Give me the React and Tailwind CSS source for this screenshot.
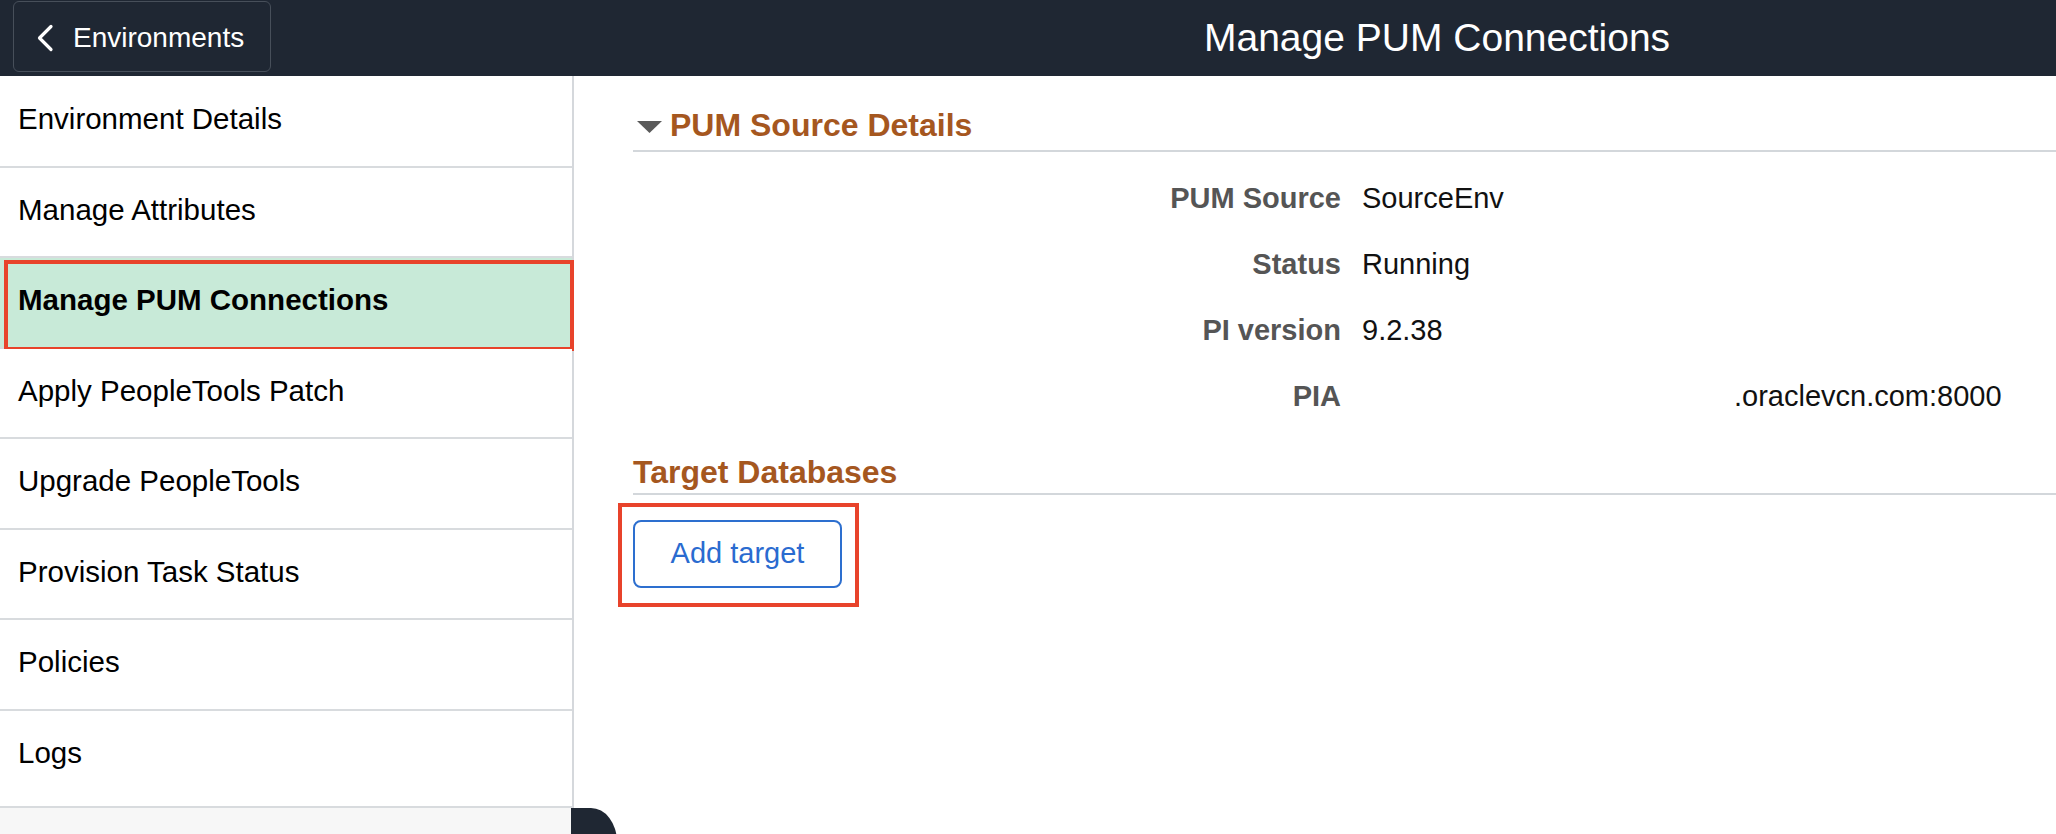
import React from "react";

const navItems = [
  "Environment Details",
  "Manage Attributes",
  "Manage PUM Connections",
  "Apply PeopleTools Patch",
  "Upgrade PeopleTools",
  "Provision Task Status",
  "Policies",
  "Logs",
];

const fields = [
  { label: "PUM Source", value: "SourceEnv", pad: false },
  { label: "Status", value: "Running", pad: false },
  { label: "PI version", value: "9.2.38", pad: false },
  { label: "PIA", value: ".oraclevcn.com:8000", pad: true },
];

export default function App() {
  return (
    <div className="relative w-[2056px] h-[834px] overflow-hidden bg-white flex flex-col font-['Liberation_Sans',Arial,Helvetica,sans-serif]">
      {/* Header */}
      <header className="h-[76px] shrink-0 bg-[#1f2733] flex items-start">
        <button className="mt-[1px] ml-[13px] h-[71px] w-[258px] rounded-[6px] border-[1.5px] border-[#474f5a] flex items-center pl-[22px] pt-[3px] text-white">
          <svg width="18" height="28" viewBox="0 0 18 28" fill="none" className="shrink-0">
            <polyline points="15,2.5 3.5,14 15,25.5" stroke="white" strokeWidth="3.2" strokeLinecap="round" strokeLinejoin="round" />
          </svg>
          <span className="ml-[19px] text-[28px] leading-none">Environments</span>
        </button>
        <h1 className="ml-[933px] self-center pb-[2px] text-[39px] font-normal text-white leading-none whitespace-nowrap">
          Manage PUM Connections
        </h1>
      </header>

      <div className="flex flex-1 min-h-0">
        {/* Sidebar */}
        <nav className="w-[574px] shrink-0 border-r-2 border-[#d5d8dc] flex flex-col pt-[1px]">
          {navItems.map((item, i) => {
            const selected = item === "Manage PUM Connections";
            const last = i === navItems.length - 1;
            return (
              <div
                key={item}
                className={
                  (last ? "h-[97px] " : "h-[90.5px] ") +
                  "relative shrink-0 border-b-2 border-[#d8dbde] flex items-start pl-[18px] pt-[20px] text-[29.5px] leading-[44px] text-black " +
                  (selected ? "bg-[#c8ead8] font-bold" : "bg-white")
                }
              >
                {item}
                {selected && (
                  <div className="absolute left-[4px] top-[2px] -right-[2px] -bottom-[4px] border-[4px] border-[#e8432b] pointer-events-none" />
                )}
              </div>
            );
          })}
          <div className="flex-1 bg-[#f7f7f7]" />
        </nav>

        {/* Main content */}
        <main className="flex-1 pl-[59px] pt-[31px]">
          <div className="flex items-center border-b-2 border-[#d3d7db] pb-[6px]">
            <svg width="25" height="12" viewBox="0 0 25 12" className="mt-[3px] ml-[4px] shrink-0">
              <polygon points="0,0 25,0 12.5,12" fill="#5a5a5a" />
            </svg>
            <h2 className="ml-[8px] text-[32px] font-bold text-[#a5571f] leading-[37px]">PUM Source Details</h2>
          </div>

          <div className="mt-[14px] flex flex-col">
            {fields.map((f) => (
              <div key={f.label} className="h-[65.8px] flex items-center text-[29px]">
                <div className="w-[708px] shrink-0 text-right font-bold text-[#555555]">{f.label}</div>
                <div className={(f.pad ? "ml-[393px] " : "ml-[21px] ") + "text-[#111111]"}>{f.value}</div>
              </div>
            ))}
          </div>

          <div className="mt-[25px] border-b-2 border-[#d3d7db] pb-[2px]">
            <h2 className="text-[32px] font-bold text-[#a5571f] leading-[37px]">Target Databases</h2>
          </div>

          <div className="mt-[25px] relative inline-block">
            <button className="h-[68px] w-[209px] rounded-[8px] border-2 border-[#2d6fcf] bg-white text-[29px] text-[#2a6bd0] flex items-center justify-center">
              Add target
            </button>
            <div className="absolute -left-[15px] -top-[17px] -right-[17px] -bottom-[19px] border-[4px] border-[#e8432b] pointer-events-none" />
          </div>
        </main>
      </div>

      {/* Collapse tab at bottom */}
      <div className="absolute left-[571px] top-[808px] w-[46px] h-[60px] bg-[#1f2733] rounded-tr-[26px_34px]" />
    </div>
  );
}
